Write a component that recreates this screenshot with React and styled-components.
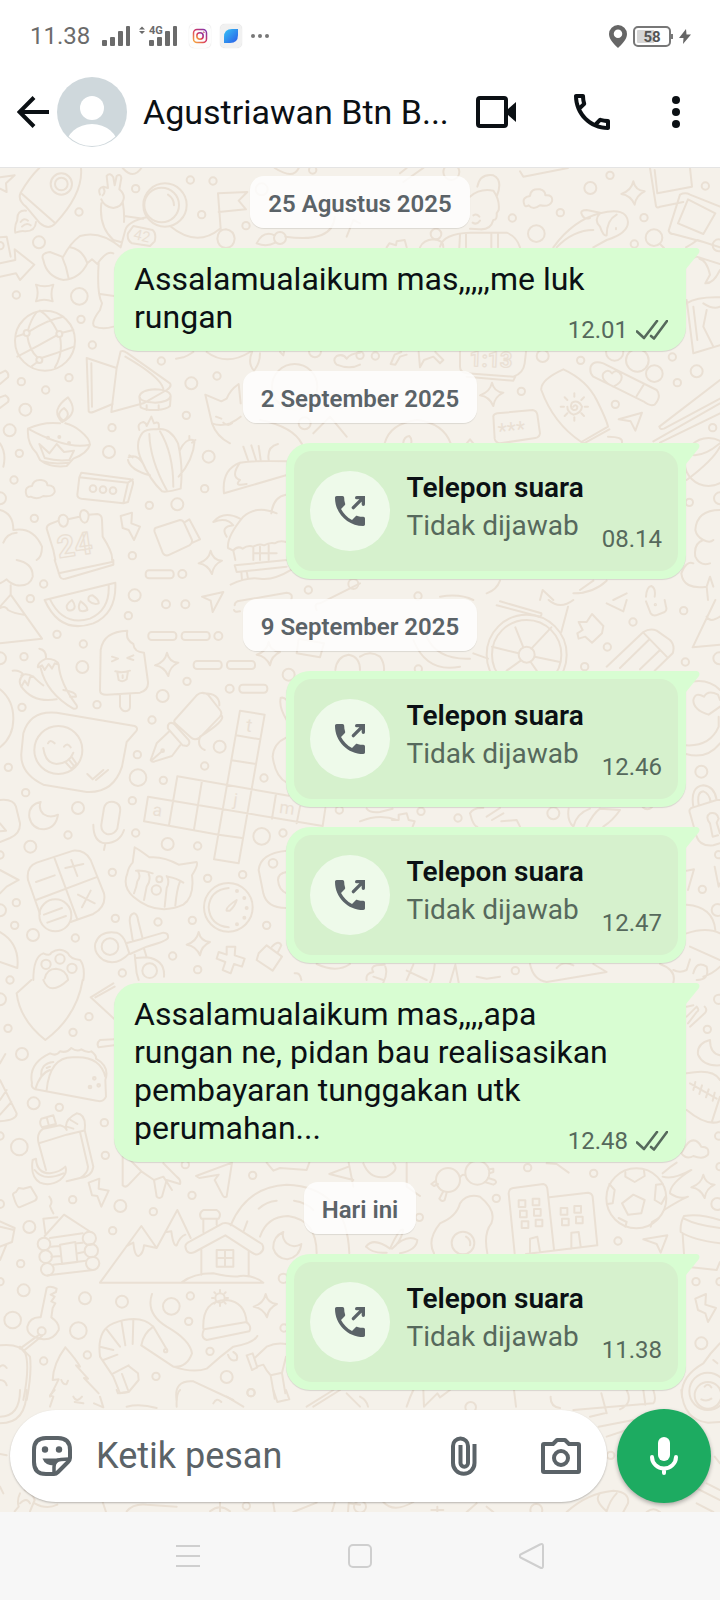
import React from 'react';
import styled, { createGlobalStyle } from 'styled-components';

const GlobalStyle = createGlobalStyle`
  * {
    box-sizing: border-box;
  }

  body {
    margin: 0;
    background: #f7f7f7;
    font-family: Roboto, 'Noto Sans', sans-serif;
    color: #0b1014;
  }

  button {
    padding: 0;
    border: 0;
    background: none;
    color: inherit;
    font: inherit;
    cursor: pointer;
  }

  svg {
    display: block;
    flex: none;
  }
`;

/* ---------- wallpaper ---------- */

// Each tile is drawn on a 3x grid and placed at x / y of the wallpaper.
// dots: [cx, cy, r], r is 11 when left out. stars: [cx, cy]. bars: [x, y, w, h].
const tiles = [
  {
    x: 0,
    y: 160,
    dots: [
      [184, 72, 32], [184, 72, 19], [237, 156], [117, 247, 18], [49, 405], [238, 409, 25], [243, 478],
      [407, 86], [571, 60], [639, 63], [605, 164], [738, 197], [277, 555], [484, 603], [207, 653],
      [64, 665], [137, 690], [76, 749, 18], [29, 811, 18], [336, 803], [574, 670, 18], [651, 648],
      [559, 766], [327, 876, 18], [58, 880], [42, 960], [626, 890, 18], [614, 986], [448, 1036],
      [532, 1033, 18], [103, 1075], [397, 1187], [938, 30], [0, 257], [0, 1015, 18], [135, 542, 90],
      [80, 519, 9], [178, 522, 9], [118, 600, 9], [495, 135, 65], [485, 135, 52], [945, 574, 18],
      [884, 680, 68], [840, 234, 18], [144, 833, 3], [178, 831, 3], [207, 849, 3], [279, 986, 10],
      [309, 989, 10], [339, 992, 10], [785, 88, 18], [914, 790, 18],
    ],
    paths: [
      'M0 52L44 46L18 70L20 96L0 86M62 98Q90 50 118 24M62 98L166 190M62 98Q52 120 78 140L120 190Q146 212 166 190Q250 100 243 24',
      'M78 152Q50 150 52 180Q42 200 46 218Q66 210 76 214Q106 214 108 186M62 186Q72 172 84 182M66 200Q80 186 92 196',
      'M0 232L20 230L32 290M0 310L46 300L44 268L103 314L60 360L48 340L0 350',
      'M108 374Q134 384 160 374Q150 400 158 424Q132 414 108 424Q118 398 108 374Z',
      'M48 530L72 522M88 514Q140 480 190 470M170 526Q110 560 52 590M186 518L220 510M82 528Q88 570 112 592M84 511Q92 480 110 456M172 514Q150 470 120 452M180 531Q190 580 165 622M124 594Q170 580 222 560M112 606L96 618',
      'M300 104Q292 84 310 80L324 84L320 48Q330 36 340 52L344 76L350 48Q362 40 364 54L358 88Q376 104 370 120Q366 140 340 144Q312 140 304 118M304 130Q296 200 340 240L362 246M368 124Q374 160 372 186M310 84Q318 96 308 106',
      'M372 168L430 176M362 262L376 210Q384 184 440 172M504 104Q522 116 522 136',
      'M400 198L458 210Q470 220 464 244L450 258L396 250Q380 240 384 220ZM510 198Q590 264 660 206',
      'M362 262Q300 210 240 228Q210 250 190 290M130 300Q140 350 190 360Q240 356 262 310Q250 270 210 262M130 300Q120 280 150 276L186 290Q200 320 206 356M262 310L276 298L292 312Q320 270 340 280M296 310Q290 400 306 430L300 450Q270 490 284 500Q310 510 340 500M300 402L342 408',
      'M654 100L742 96L716 122L738 148L656 156M654 100L662 206M652 236Q654 208 678 208Q702 212 704 236Q702 262 678 264Q654 262 652 236M368 24Q400 60 424 24',
      'M260 594L350 624M260 594L266 754Q270 760 280 756L338 732M274 610L276 740M334 756L350 624L362 574Q370 570 380 578L510 670Q516 680 500 690L430 730L334 756M376 590Q480 650 490 686',
      'M418 710Q422 690 465 688Q510 690 512 708Q508 726 465 728Q420 726 418 710L422 742Q440 752 470 750Q500 748 510 738L512 710M440 736V750M476 736V750',
      'M0 640L16 632Q28 640 24 652L0 672M0 712L16 706Q30 714 24 726L0 744M0 850Q20 880 10 920',
      'M186 786Q150 750 204 712Q240 760 186 786ZM190 782Q164 764 192 744Q216 764 190 782M84 806Q130 784 180 790M196 790Q220 796 240 812Q270 836 270 854Q200 870 84 806Q80 850 110 880L120 900Q150 924 200 918L220 896Q262 880 270 854M118 852L134 894Q170 904 208 900L222 872L192 876L170 852L148 880ZM126 904Q160 914 206 908',
      'M428 818Q402 850 424 900Q450 960 486 994Q500 998 542 986Q550 920 534 850Q510 800 470 808Q440 806 428 818ZM448 822Q450 900 500 990M480 814Q520 880 520 980M418 810Q410 790 430 786Q440 790 440 798L454 770L462 790Q480 780 476 806M384 900Q390 930 450 946M386 892Q410 880 430 912M536 950Q580 900 584 842Q560 830 540 870M568 828V840M586 840L576 848M388 886L398 892',
      'M616 704L636 790Q660 800 690 790Q710 780 722 770M616 704L664 724L680 716Q690 690 716 672L722 730M636 790Q650 830 690 850M672 1000Q664 930 720 908Q780 900 860 904M672 1000L858 946M720 908Q690 950 720 960Q700 980 740 972M780 780Q880 800 906 852M730 860L744 900M754 856L768 900M834 852Q800 860 806 900M776 858L782 900M648 770L664 776M696 790Q684 800 670 788',
      'M528 596L550 592Q562 588 580 576M620 576Q680 620 750 576M756 576Q742 610 762 632Q780 610 780 580M840 576L850 586L852 576M1080 614Q1050 630 1010 614Q996 600 1010 588Q1030 580 1040 596Q1050 580 1080 578',
      'M244 938L392 958Q402 962 398 975L384 1026L370 1030L244 1016Q232 1014 232 1004L238 952ZM238 952L384 968L370 1030M384 968L398 958',
      'M78 1000Q74 980 96 978Q100 958 124 960Q142 962 142 976Q166 976 164 996Q158 1012 130 1008Q112 1020 92 1010Q80 1014 78 1000Z',
      'M140 1106Q140 1096 150 1092L176 1082M204 1078L238 1070M266 1064L292 1062Q306 1064 306 1080L308 1130Q340 1180 336 1200M140 1106L160 1170L166 1200M176 1082Q176 1064 190 1064Q204 1068 204 1082Q202 1100 190 1100Q178 1098 176 1082M240 1068Q240 1050 252 1050Q266 1054 266 1068Q264 1088 254 1088Q242 1086 240 1068',
      'M362 1068L396 1058L394 1090L420 1100L402 1140L386 1110L368 1104Z',
      'M466 1104L540 1080Q548 1080 552 1088L576 1140Q578 1150 568 1156L504 1186Q494 1188 488 1178L464 1116Q462 1108 466 1104M552 1088L568 1078L600 1138L578 1148',
      'M684 1164Q680 1130 730 1070Q770 1034 830 1060M684 1164L700 1172Q712 1156 728 1166Q744 1154 760 1160Q776 1150 792 1156Q810 1146 824 1150Q840 1140 858 1146M640 1086Q670 1050 720 1076M640 1086Q680 1070 700 1096Q660 1100 680 1130M858 1004Q820 1010 814 1060M700 1172L706 1200M760 1162V1200M780 1160V1200M806 1156V1200M760 1180H830',
      'M0 1050Q40 1060 40 1110Q100 1100 126 1160Q126 1190 110 1200M10 1148Q20 1120 50 1118',
      'M770 250Q790 210 824 226M856 230Q1000 250 1004 170M770 250Q800 262 826 248M824 24Q880 60 896 24M1040 230L1060 180L1080 190M940 820L990 770L1040 830',
    ],
    words: [['42', 398, 236, 14, 44], ['24', 176, 1194, -8, 92, true]],
  },
  {
    x: 360,
    y: 160,
    dots: [
      [691, 84, 18], [750, 46], [601, 158], [457, 174], [529, 221, 25], [852, 173], [823, 252],
      [882, 233, 25], [1036, 78], [228, 222, 16], [46, 588], [0, 586], [548, 588, 18], [662, 601],
      [937, 591], [1010, 634, 18], [952, 668], [766, 733], [484, 694], [1058, 803], [832, 601, 34],
      [883, 641, 25], [764, 576, 26], [1046, 906, 72], [988, 1027], [1080, 1015, 18], [1076, 256, 18],
      [174, 1308], [274, 36, 24],
    ],
    stars: [[820, 98], [396, 702]],
    paths: [
      'M480 34L490 50L624 24M870 24L888 138Q892 146 900 140L970 126M884 30L892 100L996 80L990 24M960 104L926 212Q930 224 940 222L1030 246M960 104Q976 96 990 104L1080 140M984 118L954 190L1030 222L1066 160Z',
      'M352 80Q360 40 400 46Q430 60 410 110M330 110Q360 84 400 92Q420 120 416 150L410 160Q412 180 400 180Q392 210 360 208L330 206M240 260Q250 220 330 218L440 218Q470 230 480 262M300 224L298 262M318 222V262M394 220V262M414 220V262M340 166Q350 160 358 170M338 188Q350 196 360 182M180 262Q190 240 220 238Q250 240 250 262M80 262L88 250L108 256L110 244L134 240L140 262M120 40L140 24M130 66L190 24',
      'M492 130Q486 112 510 108Q512 84 540 88Q556 92 556 106Q580 104 576 124Q568 142 540 136Q520 152 506 136Q494 144 492 130Z',
      'M580 262Q640 180 720 160Q800 140 804 186Q804 220 740 240L700 262M664 160Q662 150 680 150L720 158M664 160Q670 180 690 174M720 160Q700 180 720 200Q730 230 740 226Q740 180 770 164M590 262Q640 210 700 210M900 252L912 264M978 262Q1000 250 1012 240L1080 262M768 204V208',
      'M984 300L1010 290L1080 312M1018 296Q1040 300 1050 344L1036 370Q1060 372 1080 330M980 420L1000 580L1080 556M980 430Q1010 410 1080 412M1030 430Q1060 450 1080 440M1000 440L1012 540M1040 450L1030 500L1060 560',
      'M92 612L104 584L124 576M92 612L106 614L120 590L140 584M176 576L180 622L192 600L220 590L240 610L250 600L226 576M300 576V620Q300 636 320 640L460 650Q490 640 494 610L498 576M320 650L460 662L466 650',
      'M400 768Q402 762 412 760L518 750Q530 752 532 764L540 820Q538 832 526 834L420 850Q406 848 404 836Z',
      'M544 690Q540 660 610 628Q680 660 710 720Q740 780 744 800L664 846Q580 790 544 690ZM664 846L672 850L748 808M744 830Q790 830 786 848M640 740Q646 732 652 740Q652 752 640 750Q628 742 636 728Q656 718 666 740Q664 760 640 764Q622 756 622 740M643 700v10M643 772v10M602 740h10M674 740h10M614 712l8 8M672 712l-8 8M614 768l8-8M672 768l-8-8',
      'M692 620Q700 600 730 610L890 690Q906 710 884 734Q870 740 850 724L700 650Q688 640 692 620ZM760 680Q720 660 730 640Q744 624 756 640Q772 624 784 646Q790 666 760 680ZM850 676L830 708',
      'M776 778L846 758L826 812L812 784ZM898 800L1080 660M898 800Q900 810 912 806L1080 716M880 844L1080 730M1080 760L900 848',
      'M980 960Q1060 900 1080 860M980 880Q1020 900 1080 850M1080 1050Q1010 1050 1006 1110Q1010 1130 1030 1140Q1000 1150 1006 1190Q1020 1220 1050 1210M1030 1140Q1050 1150 1060 1140M964 1240Q980 1200 1000 1210M964 1240Q970 1290 1040 1280L1050 1250L1060 1280M1040 1280L1044 1320M858 1310Q860 1280 874 1278Q888 1284 884 1310M540 1320L548 1290L580 1320M640 1300Q700 1300 740 1262M700 1262L660 1290M760 1320L800 1300M240 1310Q300 1300 340 1320M420 1262Q410 1290 380 1300',
      'M74 850Q90 790 172 780Q250 790 272 850M130 848Q132 830 148 828Q156 836 154 848M320 850L330 838L340 850',
    ],
    words: [['1:13', 328, 618, 2, 64, true], ['***', 416, 836, -6, 64]],
  },
  {
    x: 0,
    y: 560,
    dots: [
      [547, 42, 12], [655, 228, 12], [689, 386, 12], [131, 72], [91, 116], [404, 106, 18], [385, 167],
      [498, 133, 12], [556, 133, 12], [171, 223], [250, 252], [72, 290], [247, 321, 18], [66, 442],
      [291, 434], [561, 364], [488, 408, 18], [456, 480], [659, 560, 18], [614, 618], [412, 584],
      [414, 653, 25], [490, 661], [25, 622], [77, 698], [234, 744, 18], [397, 722], [204, 825],
      [407, 819], [91, 860, 18], [503, 852, 18], [593, 858], [337, 937], [49, 1028], [44, 1096],
      [99, 1125, 18], [226, 1134], [346, 1075], [474, 1086], [577, 1081], [518, 1188], [367, 1239],
      [593, 1229], [728, 944], [623, 955], [792, 654], [785, 829, 25], [849, 819], [800, 1096],
      [0, 295, 18], [0, 1051, 18], [0, 885], [866, 344, 18], [925, 90], [1060, 72, 15], [175, 570, 72],
      [488, 572, 4], [166, 1066, 48], [469, 990, 14], [478, 958, 9], [685, 1042, 73], [711, 993, 3],
      [733, 1014, 3], [740, 1044, 3], [733, 1073, 3], [711, 1093, 3], [330, 1160, 25], [449, 1232, 22],
      [138, 1213, 14], [180, 1197, 14], [216, 1225, 14], [819, 910, 13], [1018, 750],
    ],
    bars: [
      [437, 31, 84, 24], [445, 216, 84, 24], [545, 216, 84, 24], [581, 303, 84, 24],
      [681, 303, 84, 24], [718, 374, 84, 24],
    ],
    stars: [[501, 312], [596, 1150], [632, 6], [806, 280]],
    paths: [
      'M164 0L180 50Q186 60 196 56L340 14V0M176 40L336 6M50 0Q100 10 98 50Q90 80 50 76Q30 70 20 58Q10 66 0 70M32 76V104M32 104L126 236L0 250M0 144Q18 136 24 150Q40 160 72 164M32 104L0 140',
      'M134 120L346 68Q350 160 280 190Q180 224 134 120ZM150 118Q190 200 270 176Q330 150 326 76M204 150Q192 136 216 120Q230 140 220 148Q212 154 204 150ZM240 152Q232 140 242 124Q264 140 262 150Q250 156 240 152ZM266 122Q262 106 278 106Q298 120 296 130Q280 136 266 122Z',
      'M606 110L670 96L638 156L632 122Z',
      'M300 392L302 270Q310 214 382 212Q376 240 400 252Q402 276 432 278L444 366Q446 390 420 398L320 404Q300 404 300 392ZM360 404V440Q366 454 376 454Q390 452 390 440V402M336 290L354 296L336 304M400 286L382 294L400 300M346 334Q368 340 390 332M352 338L356 360Q368 368 380 358L384 334M368 346V354',
      'M118 266Q140 270 138 296Q110 310 114 322L126 316L134 330L146 312L156 326L164 310L176 314Q170 296 138 296M176 314Q180 370 230 436Q234 448 220 446Q140 400 122 324M38 332Q60 330 70 344Q52 360 64 380L74 362L84 376L90 352L100 350Q80 338 64 346M64 380Q100 430 170 418M100 350Q120 370 130 376M190 390Q230 396 228 410L210 410',
      'M70 520Q90 450 170 458L404 498Q416 504 408 514L380 546L366 620Q340 700 260 696L130 674Q60 640 64 580ZM144 550Q150 536 164 550M192 560Q202 546 212 562M130 564Q136 610 170 612Q208 610 220 578M196 606L214 626L230 612L216 592M206 598L222 618M262 642L278 658L310 630M288 660L324 630',
      'M524 480L590 406Q606 392 624 404L660 450Q668 460 660 470L600 532Q584 544 572 532L528 492Q520 486 524 480ZM508 490Q516 486 524 494L566 540Q572 552 560 558L548 556L504 506Q502 496 508 490ZM508 514L470 550L452 600Q456 608 464 604L516 588L540 556M456 600L486 574M610 400Q660 400 658 436M664 466Q680 480 600 530Q590 560 614 570',
      'M720 452L794 464L716 910L642 898ZM708 526L780 538M695 601L768 612M656 824L726 834M532 649L866 707M532 649L507 795M444 710L968 798L976 745M444 710L432 784L656 824M606 662L582 808M828 702L816 776M900 740L890 790',
      'M0 388Q40 420 40 476Q40 530 0 562M122 726Q84 734 88 772Q96 808 132 808Q168 804 174 764Q150 776 130 762Q114 746 122 726Z',
      'M312 744Q318 722 342 726Q364 732 360 756L352 806Q342 826 320 822Q302 814 304 794ZM280 794Q280 846 316 850Q360 848 372 810M316 850L312 870M0 720Q40 716 48 740L60 790Q62 820 30 834L0 846M0 790L18 812L0 814',
      'M84 960Q78 920 110 908L220 872Q256 870 272 900L312 1000Q320 1040 280 1062L212 1086M84 960L120 1062M164 896L232 1078M108 1020L288 952M108 966L164 946M196 924L250 912M214 900L232 948M234 1004L284 1030M272 992L246 1042M132 1064L186 1044M142 1088L198 1068',
      'M404 862Q420 870 448 892Q490 888 536 914L590 906Q596 914 576 946Q584 1010 550 1034Q470 1070 400 1010Q366 980 382 940Q386 920 398 908ZM408 932Q430 930 458 940M414 934Q424 950 412 964Q410 980 402 1000M446 942Q454 960 440 980L432 1020M500 948Q510 964 500 984L494 1040M504 950Q530 954 550 968M540 964Q530 990 526 1036',
      'M686 984Q630 990 626 1042Q630 1096 686 1102M680 1052Q676 1042 710 1020Q706 1036 690 1052Z',
      'M390 1090Q386 1064 402 1060Q412 1062 414 1080L428 1136L490 1118Q506 1118 504 1134Q500 1144 440 1160L390 1182M398 1140L390 1090M378 1150L428 1136M388 1180Q350 1220 310 1200Q280 1180 286 1150Q300 1110 350 1118Q370 1126 378 1150L388 1180M404 1184L410 1240L416 1260M432 1166L440 1192Q496 1200 492 1250M408 1194L440 1192',
      'M680 1160L706 1160L704 1186L734 1196L726 1220L702 1212L692 1240L668 1230L676 1206L650 1196L656 1176L680 1184ZM776 1180L800 1156L846 1190L818 1232L770 1200ZM816 1160Q836 1138 844 1156L832 1180',
      'M100 1260Q100 1190 130 1180Q150 1190 154 1178Q180 1160 204 1180Q210 1196 240 1200Q256 1220 250 1260M134 1256Q140 1226 168 1226Q200 1230 204 1258M0 930L56 960L20 980L0 1000M0 1116Q60 1150 52 1224L0 1206',
      'M704 16L860 0M704 16L710 36L860 20M724 36L726 60M740 34L744 56M692 74Q740 50 780 56Q820 62 876 28M704 136Q704 128 712 124L860 98Q880 100 874 118M702 150Q704 158 720 154M950 150Q940 130 960 130L1080 70',
      'M860 872Q780 880 776 930L790 1000Q800 1044 858 1044M860 936Q834 940 834 960Q836 990 860 1000M842 414Q836 440 860 480M842 414Q850 410 860 420M860 532Q820 550 818 590Q826 650 860 668M1006 330Q1010 290 1046 284Q1080 290 1080 330M950 1212Q1010 1240 1050 1212M884 1240Q900 1236 904 1260M896 236L972 250L960 292L890 280Z',
    ],
    words: [['t', 736, 514, 8, 56], ['a', 456, 766, 8, 52], ['j', 698, 736, 8, 52], ['m', 836, 758, 8, 52]],
  },
  {
    x: 360,
    y: 600,
    dots: [
      [500, 164, 120], [500, 164, 104], [500, 164, 24], [971, 32], [819, 66], [742, 141], [674, 200],
      [976, 186], [1078, 175, 18], [175, 207], [183, 634], [294, 654], [580, 640, 18], [1024, 515, 18],
      [1027, 868], [466, 1112], [1076, 764], [1073, 930, 18], [862, 610, 18], [886, 14, 2],
    ],
    paths: [
      'M466 82L490 142M574 82L514 146M524 170L600 186M476 160L396 140M482 182L440 212M512 186L530 212M410 16L540 50Q546 46 544 40L420 4M624 20L604 96M566 0Q600 30 640 0M340 160L384 176M160 120Q200 220 300 200M200 110Q230 180 330 176',
      'M656 66L680 66L696 42L730 78L726 100L696 128L676 110L656 116L652 100L668 90ZM858 4L872 40Q878 48 888 46L914 36Q922 30 918 20L914 0M0 170Q30 150 60 170Q74 190 72 212',
      'M740 200L850 96Q870 84 890 92L930 120Q946 136 938 160L884 212M850 98L920 170M866 120L780 204M900 150L840 208M1066 0L998 142L1080 134M1040 50Q1050 70 1080 50M740 10L790 34L800 0',
      'M978 250Q1040 230 1080 270M978 462Q1040 480 1080 430M978 436Q1050 440 1076 380V350M1046 344Q1000 330 1000 300Q1006 274 1032 290Q1044 268 1074 284L1080 300M1046 344L1080 320',
      'M1000 620Q990 560 1030 556Q1064 560 1070 600M1016 614Q1010 576 1030 574Q1048 580 1052 606M990 640Q984 626 1000 622L1070 600L1080 600M990 640L1010 710Q1020 740 1060 736L1080 730M1050 670Q1034 650 1050 640Q1070 634 1076 656L1070 668L1080 700M1050 670L1058 710L1074 706',
      'M980 812L1002 808L984 870M1064 800L1076 860L1080 850M980 914Q1060 920 1066 990M980 1000Q1040 980 1080 1000M990 1040L1080 1080M940 1110Q960 1120 980 1110L990 1078M1000 1120Q1010 1080 1040 1100Q1050 1140 1010 1140M1080 1100Q1060 1120 1030 1130M900 1092Q950 1110 940 1148',
      'M330 640Q340 680 352 680M330 640Q340 622 370 624M380 650L420 624M396 660L430 640M424 664L470 660L480 680M626 626Q620 660 640 680M640 680Q650 640 690 626M680 680Q700 640 720 626M780 630Q760 660 730 680M720 626L780 630M0 664Q60 640 110 660M96 660L116 660V644L140 640L146 660L164 664L158 680M20 626Q30 640 60 636L98 626',
      'M20 1140Q16 1120 40 1116Q30 1100 50 1096L74 1094M40 1130L70 1140M76 1100Q84 1120 70 1148M140 1140L160 1094M224 1094Q220 1130 210 1148M140 1112L200 1140M270 1148L286 1094L296 1148M350 1130L380 1136L420 1130M510 1092Q520 1140 560 1146L740 1116L700 1092M590 1104Q610 1080 640 1096',
    ],
  },
  {
    x: 0,
    y: 980,
    dots: [
      [30, 0], [0, 58, 18], [267, 110], [24, 145], [219, 157], [66, 222, 18], [101, 370, 18], [178, 382],
      [313, 428], [58, 501, 25], [316, 526], [0, 468], [218, 659], [361, 678, 18], [460, 695], [576, 646],
      [88, 741, 18], [338, 752], [62, 851], [0, 905], [71, 931, 18], [255, 955, 18], [366, 965, 18],
      [571, 948], [514, 979, 25], [38, 1020, 25], [235, 1052, 25], [566, 1024], [262, 1125], [630, 1114],
      [131, 1143], [468, 1189], [680, 1191, 18], [753, 1238], [556, 554], [758, 586], [0, 672, 12],
      [850, 895, 14], [852, 1044], [283, 295, 4], [270, 321, 4], [296, 316, 4], [132, 792, 19],
      [137, 830, 19], [142, 868, 19], [268, 775, 20], [274, 812, 20], [278, 850, 20], [125, 1054, 12],
      [497, 1112, 5], [660, 954, 14],
    ],
    stars: [[797, 976]],
    paths: [
      'M50 40L94 0M50 40Q60 120 136 180Q230 110 248 0M130 0Q150 50 204 0M272 52L340 10M272 52L342 116M286 52L344 20',
      'M96 310Q84 250 150 220Q170 230 180 214Q200 220 214 204Q230 216 244 208Q262 220 274 214Q290 226 288 236Q330 260 316 300L318 350Q310 368 290 362L106 328Q92 322 96 310ZM140 330Q150 230 220 232Q300 226 316 290M106 328Q120 280 150 270M124 290Q120 250 160 246M140 264L150 260',
      'M342 178L300 180Q288 190 296 202L342 196M124 416L160 406L168 432L126 442Q116 430 124 416ZM140 412L146 434M116 490Q108 460 130 446L180 436Q196 440 200 450Q190 420 230 400Q260 404 254 450L280 560Q276 590 240 594L200 604M116 490Q150 480 200 464L250 452M116 490L138 570M240 456L264 560Q264 580 240 594M200 440L220 446M212 420L232 432',
      'M98 540L108 536Q110 580 150 580Q180 576 196 560Q204 580 180 600Q150 620 120 608Q90 590 98 540ZM104 570Q130 606 190 580',
      'M40 648Q36 640 48 636L56 624L70 626L92 620L110 650Q112 660 100 664L58 682Q50 682 40 648ZM266 608L298 596L296 626L326 632L304 680L292 648L276 646ZM148 650Q160 664 150 678Q154 690 160 700',
      'M130 716L172 712M130 716L136 760M134 768L192 704L272 756M150 774L248 760M180 794L226 786L232 846L186 852ZM152 800L178 798M154 830L182 828M160 854L258 842M144 886L280 870M232 790L248 788M234 820L252 816',
      'M300 908L424 738L470 804L532 690L572 774M300 908H790M380 798L400 788Q404 830 416 828Q430 820 432 796L470 804M500 756L514 754Q520 800 530 796Q540 770 556 764',
      'M556 800Q556 790 570 784L668 730Q680 726 694 734L786 792Q796 808 780 820Q770 828 756 818L676 766L584 816Q560 826 556 800ZM604 808V884M746 814V884M650 810H700V860H650ZM650 834H700M675 810V860M544 908Q580 880 640 880Q700 894 720 888Q760 884 790 908M610 756V716M650 734V716M604 716Q594 700 610 690H650Q666 700 656 716Z',
      'M692 736Q740 620 860 614Q1040 620 1048 820M776 686Q800 664 830 662M882 662Q920 668 940 690M780 770Q800 710 864 708Q950 720 950 820M742 724L730 756M850 756Q818 770 820 806Q830 836 862 838Q900 830 904 792Q880 806 860 790Q844 772 850 756Z',
      'M368 530V616Q376 624 384 616L424 574L380 530M424 574L462 600L470 650Q478 658 486 650L500 600L540 612Q544 600 530 590L490 550M462 600L490 590L516 630M588 588L696 548L680 650Q672 654 668 646L644 600L656 584L598 594ZM800 548L820 572L840 564L920 570L928 548M988 582L1046 560M988 582L1060 600M1046 548L1060 620',
      'M140 924Q150 916 170 926L168 936L152 944L164 950L154 964L166 970L158 984L154 1012Q180 1030 176 1050Q160 1080 130 1078Q80 1070 82 1040Q90 1010 122 1012ZM118 1064L60 1106M126 1068L74 1110',
      'M340 1190L300 1130Q290 1050 340 1030Q420 1000 460 1040L500 1108M424 1096Q430 1060 460 1040M424 1096L520 1160Q560 1164 576 1120Q570 1080 500 1040Q436 1000 456 942M300 1100L340 1110M320 1048L360 1100M364 1022L376 1096M400 1018L398 1092M340 1180L386 1156M310 1140L352 1124M340 1190L360 1240L386 1236L416 1200L414 1180L386 1158M366 1182L384 1230M520 1160Q580 1180 620 1166Q660 1130 700 1100Q760 1090 772 1068M684 1124Q690 1146 710 1140Q716 1124 700 1116',
      'M610 1046Q606 960 680 960Q736 966 740 1028M612 1048L740 1026Q756 1040 748 1054L620 1080Q600 1074 612 1048ZM660 930v6M660 972v6M636 954h6M678 954h6M643 937l4 4M677 937l-4 4M643 971l4-4M677 971l-4-4',
      'M740 1126L758 1120L772 1162L756 1170ZM764 1134L800 1100Q830 1086 858 1092M770 1160L790 1154Q800 1174 812 1186L846 1178L858 1130M812 1186L824 1256M846 1180L856 1240',
      'M196 1102Q230 1140 240 1160L228 1156L264 1196L252 1194L296 1240M196 1102Q160 1150 158 1200L176 1198L150 1250M184 1200Q190 1216 200 1212L204 1202M0 1096Q60 1090 76 1120Q90 1160 70 1260M60 1100L90 1130Q96 1180 80 1260M0 1160Q10 1150 20 1164M0 1200Q16 1200 20 1216M530 1260Q520 1200 580 1204L700 1260',
      'M0 300L50 400Q52 420 0 424M0 250L16 222M0 360L20 330M0 404L34 366M0 724L44 744L36 786L0 800M0 740L42 750M20 792L0 840',
    ],
  },
  {
    x: 360,
    y: 980,
    dots: [
      [1042, 148], [1076, 58, 14], [1076, 468], [503, 563], [701, 580], [409, 655], [178, 712],
      [774, 783], [1008, 905], [1080, 560], [1080, 905], [1072, 672, 18], [1024, 1090, 18],
      [829, 655, 90], [264, 600, 36], [352, 578, 36], [309, 789, 34], [1044, 1234, 56],
    ],
    bars: [
      [476, 661, 20, 20], [518, 656, 20, 20], [480, 692, 20, 20], [522, 687, 20, 20],
      [485, 724, 20, 20], [527, 719, 20, 20], [602, 684, 20, 20], [643, 678, 20, 20],
      [606, 716, 20, 20], [648, 710, 20, 20],
    ],
    stars: [[1030, 618]],
    paths: [
      'M980 80L1000 76M980 110L1010 80Q1020 90 1010 96L984 130M1034 80Q1044 90 1034 100L990 140M1050 180Q1010 190 1014 224Q1030 260 1080 256M1050 180Q1050 220 1080 226',
      'M980 280Q1060 264 1080 300M980 390Q1040 440 1080 424M1080 350L1056 424M990 310L1070 356M1006 306L1000 330M1026 316L1018 342M1046 328L1038 352M1064 338L1058 362',
      'M964 520Q980 490 990 484Q1010 474 1024 500Q1050 500 1044 524Q1030 540 1000 528Q980 540 964 520',
      'M820 644L854 660L844 700L804 704L786 670ZM796 576L796 590L824 606L854 588L852 572M888 614L908 612M888 614L884 660L904 672L916 650M748 612L764 630L758 670L742 672M776 714L800 726L796 740M872 740L876 726L896 714',
      'M908 580Q930 560 950 548M908 590Q940 600 994 570Q930 610 930 640Q960 660 984 650Q960 660 912 690M300 592Q308 580 316 586M228 602L214 612L222 618L234 612M386 568L400 566V576L388 580M250 634L238 656Q246 668 254 660L260 638M374 606L400 614Q414 608 404 600L384 594',
      'M222 820Q200 780 240 730Q290 710 300 670Q320 640 360 650Q410 690 394 730Q370 760 382 820M318 770Q334 780 330 796',
      'M464 820L446 640Q446 626 460 624L550 612Q560 614 562 626L582 808M568 652L684 638Q696 640 698 650L712 796L498 822M510 822V776L532 770L540 816M634 806V758L656 756L662 800M850 778L922 766L902 818L890 792Z',
      'M972 708Q960 730 962 756Q1000 780 1080 790M972 708Q1020 700 1080 720M972 716Q1010 736 1080 744M968 764L974 850M980 860L1070 870L1080 846M1006 956L1038 942L1036 974L1068 984L1044 1026L1036 1000L1014 990Z',
      'M1080 1090Q1050 1120 1030 1150Q960 1190 966 1250M1034 1220Q1044 1208 1054 1222M1060 1140L1072 1150M18 800Q40 770 90 806Q120 740 130 750Q120 790 96 806Q140 760 172 780Q170 810 120 820M18 800Q40 822 80 818M10 550Q30 600 80 590Q120 570 100 550M140 550V620L180 648M560 550L590 552L626 578',
    ],
  },
  {
    x: 0,
    y: 1390,
    dots: [[753, 8], [739, 348]],
    paths: [
      'M80 0Q80 100 0 100M60 0Q60 80 0 80M150 50L160 20L150 16L164 0M220 20Q230 40 246 20M224 36L250 40M282 40L310 52L300 20M350 0L354 10L384 6M530 50Q528 10 540 0M640 40Q650 20 664 36M680 20L730 50M820 0L832 36L868 28L858 0M920 50L1000 0M940 50L1020 0M1040 10L1080 50M380 50Q420 40 470 54M0 192L20 196M0 290L10 310',
      'M60 310Q50 330 56 350L44 364M74 300Q100 310 104 330L90 364M60 340Q80 320 90 340M104 340Q140 360 172 344M308 336L318 366M380 364Q400 340 440 344L530 350M660 336V366M630 364Q660 340 690 364M820 340L824 366M880 366L950 338M1004 338L996 366M1044 366L1046 340L1080 344',
    ],
  },
  {
    x: 360,
    y: 1390,
    dots: [[332, 52, 16], [1044, 16, 40], [752, 196], [529, 360, 18], [0, 350, 18]],
    paths: [
      'M140 50Q150 20 160 0M0 20Q20 30 24 50M192 50L190 0M192 50L232 10L240 22L270 0M462 0L468 50M572 20Q570 50 600 54M640 60L880 40Q890 30 880 0M724 10L740 70M800 0Q820 40 780 58M850 0L856 44M690 80L740 68M964 0Q970 90 1044 98L1080 96M1024 28Q1040 36 1054 26M716 110L820 90M740 140L800 120',
      'M1040 280L1080 300M1000 290L1080 330M1010 340L1060 366M620 366Q680 310 760 302Q810 306 804 340L790 366M720 310Q700 330 740 364M770 310Q750 330 740 364M860 366Q880 350 900 366M214 360L250 360M232 350V366M320 366L350 340M380 350L400 366M70 336Q100 370 160 336M1064 200L1080 220',
    ],
  },
];

const starPath = ([x, y]) =>
  `M${x} ${y - 34}Q${x + 6} ${y - 6} ${x + 34} ${y - 4}Q${x + 8} ${y + 8} ${x + 4} ${y + 36}Q${x - 8} ${y + 8} ${x - 36} ${y + 4}Q${x - 6} ${y - 6} ${x} ${y - 34}Z`;

const Wallpaper = () => (
  <WallpaperSvg viewBox="0 168 720 1344" preserveAspectRatio="xMidYMin slice" aria-hidden="true">
    {tiles.map(({ x, y, dots = [], bars = [], stars = [], paths = [], words = [] }) => (
      <g key={`${x}-${y}`} transform={`translate(${x} ${y}) scale(0.33333)`}>
        <path d={[...paths, ...stars.map(starPath)].join('')} />
        {dots.map(([cx, cy, r = 11]) => (
          <circle key={`${cx}-${cy}-${r}`} cx={cx} cy={cy} r={r} />
        ))}
        {bars.map(([bx, by, w, h]) => (
          <rect key={`${bx}-${by}`} x={bx} y={by} width={w} height={h} rx={w > 30 ? 10 : 0} />
        ))}
        {words.map(([word, wx, wy, angle, size, outlined]) => (
          <text
            key={word}
            transform={`translate(${wx} ${wy}) rotate(${angle})`}
            fontSize={size}
            fontWeight={outlined ? 700 : 400}
            fill={outlined ? 'none' : '#eae0d4'}
            stroke={outlined ? '#eae0d4' : 'none'}
            strokeWidth="4"
          >
            {word}
          </text>
        ))}
      </g>
    ))}
  </WallpaperSvg>
);

/* ---------- icons ---------- */

const StrokeIcon = ({ w, h, sw = 4, children }) => (
  <svg
    width={w}
    height={h}
    viewBox={`0 0 ${w} ${h}`}
    fill="none"
    stroke="currentColor"
    strokeWidth={sw}
    strokeLinejoin="round"
    aria-hidden="true"
  >
    {children}
  </svg>
);

const SignalIcon = () => (
  <svg width="28" height="20" viewBox="0 0 28 20" fill="#6b6b6b" aria-hidden="true">
    <rect x="0" y="14" width="5" height="6" rx="1" />
    <rect x="8" y="11" width="5" height="9" rx="1" />
    <rect x="16" y="5" width="5" height="15" rx="1" />
    <rect x="24" y="0" width="4" height="20" rx="1" />
  </svg>
);

const DataSignalIcon = () => (
  <svg width="41" height="28" viewBox="0 -4 41 28" fill="#6b6b6b" aria-hidden="true">
    <path d="M0 3.500L3 .5L6 3.500ZM0 5L3 8L6 5Z" />
    <text x="10" y="8" fontSize="11" fontWeight="700">
      4G
    </text>
    <rect x="10" y="14" width="5" height="6" rx="1" />
    <rect x="18" y="11" width="5" height="9" rx="1" />
    <rect x="26" y="5" width="5" height="15" rx="1" />
    <rect x="34" y="0" width="4" height="20" rx="1" />
  </svg>
);

const InstagramIcon = () => (
  <svg width="16" height="16" viewBox="0 0 16 16" fill="none" stroke="url(#ig)" aria-hidden="true">
    <defs>
      <linearGradient id="ig" x1="0" y1="1" x2="1" y2="0">
        <stop offset="0" stopColor="#f9b13c" />
        <stop offset="0.5" stopColor="#d8365f" />
        <stop offset="1" stopColor="#7a35b5" />
      </linearGradient>
    </defs>
    <rect x="1.500" y="1.500" width="13" height="13" rx="3.500" strokeWidth="1.500" />
    <circle cx="8" cy="8" r="3.200" strokeWidth="1.600" />
    <circle cx="11.800" cy="4.300" r=".5" />
  </svg>
);

const LeafIcon = () => (
  <svg width="16" height="16" viewBox="0 0 16 16" aria-hidden="true">
    <defs>
      <linearGradient id="leaf" x1="0" y1="0" x2="1" y2="1">
        <stop offset="0" stopColor="#35c3f5" />
        <stop offset="1" stopColor="#2b5be8" />
      </linearGradient>
    </defs>
    <path d="M3 3Q5 1 9 1H15V7Q15 11 13 13Q11 15 7 15H1V9Q1 5 3 3Z" fill="url(#leaf)" />
  </svg>
);

const PinIcon = () => (
  <svg width="18" height="23" viewBox="0 0 18 23" fill="#666" aria-hidden="true">
    <path
      fillRule="evenodd"
      d="M9 0A9 9 0 0 0 0 9C0 14.500 5 19 9 23C13 19 18 14.500 18 9A9 9 0 0 0 9 0ZM9 4.500A4.200 4.200 0 1 1 9 13A4.200 4.200 0 0 1 9 4.500Z"
    />
  </svg>
);

const BoltIcon = () => (
  <svg width="12" height="15" viewBox="0 0 12 15" fill="#666" aria-hidden="true">
    <path d="M7 0L0 9H4.500L4 15L12 5.500H7.500Z" />
  </svg>
);

const BackIcon = () => (
  <StrokeIcon w={32} h={32}>
    <path d="M32 16H3M17 1.500L2.500 16L17 30.500" strokeLinejoin="miter" />
  </StrokeIcon>
);

const AvatarIcon = () => (
  <svg width="70" height="70" viewBox="0 0 70 70" aria-hidden="true">
    <defs>
      <clipPath id="avatar">
        <circle cx="35" cy="35" r="34" />
      </clipPath>
    </defs>
    <circle cx="35" cy="35" r="35" fill="#cfd8dc" />
    <circle cx="35" cy="31" r="12" fill="#fff" />
    <ellipse cx="35" cy="69" rx="26" ry="22" fill="#fff" clipPath="url(#avatar)" />
  </svg>
);

const VideoIcon = () => (
  <StrokeIcon w={40} h={32}>
    <rect x="2" y="2" width="28" height="28" rx="2" />
    <path d="M31 14L40 6V26L31 18Z" fill="currentColor" stroke="none" />
  </StrokeIcon>
);

const PhoneIcon = () => (
  <svg width="48" height="48" viewBox="0 0 24 24" fill="currentColor" aria-hidden="true">
    <path d="M6.540 5c.06.89.21 1.760.45 2.590l-1.200 1.200c-.41-1.200-.67-2.470-.76-3.790h1.510m9.860 12.020c.85.24 1.720.39 2.600.45v1.490c-1.320-.09-2.590-.35-3.800-.75l1.200-1.190M7.500 3H4c-.55 0-1 .45-1 1 0 9.390 7.610 17 17 17 .55 0 1-.45 1-1v-3.490c0-.55-.45-1-1-1-1.240 0-2.450-.2-3.570-.57-.1-.04-.21-.05-.31-.05-.26 0-.51.1-.71.29l-2.200 2.200c-2.830-1.450-5.150-3.760-6.590-6.590l2.200-2.200c.28-.28.36-.67.25-1.020C8.700 6.450 8.500 5.250 8.500 4c0-.55-.45-1-1-1z" />
  </svg>
);

const MoreIcon = () => (
  <svg width="8" height="32" viewBox="0 0 8 32" fill="currentColor" aria-hidden="true">
    <circle cx="4" cy="4" r="4" />
    <circle cx="4" cy="16" r="4" />
    <circle cx="4" cy="28" r="4" />
  </svg>
);

const OutgoingCallIcon = () => (
  <svg width="40" height="40" viewBox="0 0 24 24" fill="#5b6368" aria-hidden="true">
    <path d="M20 15.500c-1.250 0-2.450-.2-3.570-.57-.35-.11-.74-.03-1.020.24l-2.200 2.200c-2.830-1.440-5.150-3.750-6.590-6.580l2.200-2.210c.28-.27.36-.66.25-1.010C8.700 6.450 8.500 5.250 8.500 4c0-.55-.45-1-1-1H4c-.55 0-1 .45-1 1 0 9.390 7.610 17 17 17 .55 0 1-.45 1-1v-3.500c0-.55-.45-1-1-1z" />
    <path
      d="M14 10L20 4M16 4H20V8"
      fill="none"
      stroke="#5b6368"
      strokeWidth="2"
      strokeLinecap="round"
    />
  </svg>
);

const TicksIcon = () => (
  <StrokeIcon w={32} h={20} sw={2.6}>
    <path d="M1 11.500L8 18L21 1M15 16L18 18.500L31 1" strokeLinecap="round" />
  </StrokeIcon>
);

const TailIcon = () => (
  <svg width="16" height="24" viewBox="0 0 16 24" fill="#d8fdd2" aria-hidden="true">
    <path d="M0 0H13Q16.500 1 15 5L2 21H0Z" />
  </svg>
);

const StickerIcon = () => (
  <StrokeIcon w={40} h={40}>
    <path d="M14 2H26Q38 2 38 14V22Q38 24 36 26L26 36Q24 38 22 38H14Q2 38 2 26V14Q2 2 14 2Z" />
    <path d="M22 37V31Q22 24 29 23.500L37 23" strokeWidth="3.500" />
    <circle cx="13" cy="13.500" r="3.200" fill="currentColor" stroke="none" />
    <circle cx="27" cy="13.500" r="3.200" fill="currentColor" stroke="none" />
    <path d="M10.500 22.500H29L22 29.500Q13 29.500 10.500 22.500Z" fill="currentColor" stroke="none" />
  </StrokeIcon>
);

const ClipIcon = () => (
  <StrokeIcon w={26} h={40}>
    <path d="M23.500 8V27A10.700 10.700 0 0 1 2 27V10A7.500 7.500 0 0 1 17 10V27A3.500 3.500 0 0 1 9.500 27V9" />
  </StrokeIcon>
);

const CameraIcon = () => (
  <StrokeIcon w={40} h={36}>
    <path d="M3 6H12L16 2H24L28 6H37Q38 6 38 7V33Q38 34 37 34H3Q2 34 2 33V7Q2 6 3 6Z" />
    <circle cx="20" cy="20" r="7" />
  </StrokeIcon>
);

const MicIcon = () => (
  <StrokeIcon w={28} h={38}>
    <rect x="8" y="0" width="12" height="24" rx="6" fill="currentColor" stroke="none" />
    <path d="M2 20A12 11.500 0 0 0 26 20M14 32V36" strokeLinecap="round" />
  </StrokeIcon>
);

/* ---------- parts ---------- */

const TextBubble = ({ children, time }) => (
  <Message>
    {children}
    <Meta>
      <Time>{time}</Time>
      <TicksIcon />
    </Meta>
    <Tail>
      <TailIcon />
    </Tail>
  </Message>
);

const CallBubble = ({ time }) => (
  <Call>
    <CallCard>
      <CallBadge>
        <OutgoingCallIcon />
      </CallBadge>
      <CallLines>
        <CallTitle>Telepon suara</CallTitle>
        <CallStatus>Tidak dijawab</CallStatus>
      </CallLines>
      <CallTime>{time}</CallTime>
    </CallCard>
    <Tail>
      <TailIcon />
    </Tail>
  </Call>
);

const App = () => {
  return (
    <Screen>
      <GlobalStyle />
      <StatusBar>
        <StatusGroup>
          <Clock>11.38</Clock>
          <SignalIcon />
          <DataSignalIcon />
          <AppTile>
            <InstagramIcon />
          </AppTile>
          <AppTile $shaded>
            <LeafIcon />
          </AppTile>
          <svg width="18" height="4" viewBox="0 0 18 4" fill="#777" aria-hidden="true">
            <circle cx="2" cy="2" r="2" />
            <circle cx="9" cy="2" r="2" />
            <circle cx="16" cy="2" r="2" />
          </svg>
        </StatusGroup>
        <StatusGroup $tight>
          <PinIcon />
          <Battery>58</Battery>
          <BoltIcon />
        </StatusGroup>
      </StatusBar>

      <Header>
        <BackButton type="button" aria-label="Kembali">
          <BackIcon />
        </BackButton>
        <AvatarIcon />
        <ContactName>Agustriawan Btn B...</ContactName>
        <HeaderButton type="button" aria-label="Panggilan video">
          <VideoIcon />
        </HeaderButton>
        <HeaderButton type="button" aria-label="Panggilan suara">
          <PhoneIcon />
        </HeaderButton>
        <HeaderButton type="button" aria-label="Opsi lainnya" $narrow>
          <MoreIcon />
        </HeaderButton>
      </Header>

      <Chat>
        <Wallpaper />
        <Thread>
          <DatePill>25 Agustus 2025</DatePill>
          <TextBubble time="12.01">Assalamualaikum mas,,,,,me luk rungan</TextBubble>
          <DatePill>2 September 2025</DatePill>
          <CallBubble time="08.14" />
          <DatePill>9 September 2025</DatePill>
          <CallBubble time="12.46" />
          <CallBubble time="12.47" />
          <TextBubble time="12.48">
            Assalamualaikum mas,,,,apa rungan ne, pidan bau realisasikan pembayaran tunggakan utk
            perumahan...
          </TextBubble>
          <DatePill>Hari ini</DatePill>
          <CallBubble time="11.38" />
        </Thread>
        <Composer>
          <InputBar>
            <button type="button" aria-label="Stiker">
              <StickerIcon />
            </button>
            <MessageInput type="text" aria-label="Ketik pesan" placeholder="Ketik pesan" />
            <button type="button" aria-label="Lampirkan">
              <ClipIcon />
            </button>
            <CameraButton type="button" aria-label="Kamera">
              <CameraIcon />
            </CameraButton>
          </InputBar>
          <MicButton type="button" aria-label="Rekam pesan suara">
            <MicIcon />
          </MicButton>
        </Composer>
      </Chat>

      <NavBar>
        <NavButton type="button" aria-label="Menu">
          <StrokeIcon w={24} h={24} sw={2}>
            <path d="M0 2H24M0 12H24M0 22H24" />
          </StrokeIcon>
        </NavButton>
        <NavButton type="button" aria-label="Beranda">
          <StrokeIcon w={24} h={24} sw={2}>
            <rect x="1" y="1" width="22" height="22" rx="4" />
          </StrokeIcon>
        </NavButton>
        <NavButton type="button" aria-label="Kembali">
          <StrokeIcon w={26} h={26} sw={2}>
            <path d="M21 1.500Q24 0 24 3V23Q24 26 21 24.500L1.500 14.500Q0 13 1.500 11.500Z" />
          </StrokeIcon>
        </NavButton>
      </NavBar>
    </Screen>
  );
};

/* ---------- styles ---------- */

const Screen = styled.div`
  min-height: 100vh;
  display: flex;
  flex-direction: column;
`;

const StatusBar = styled.div`
  display: flex;
  align-items: center;
  justify-content: space-between;
  height: 72px;
  padding: 0 29px 0 30px;
  background: #fff;
`;

const StatusGroup = styled.div`
  display: flex;
  align-items: center;
  gap: ${({ $tight }) => ($tight ? '6px' : '9px')};
`;

const Clock = styled.span`
  margin-right: 3px;
  font-size: 24px;
  line-height: 28px;
  color: #6b6b6b;
`;

const AppTile = styled.span`
  display: grid;
  place-items: center;
  width: 22px;
  height: 24px;
  border-radius: 5px;
  background: ${({ $shaded }) => ($shaded ? '#f1f1f1' : '#fdfdfd')};
  box-shadow: 0 0 1px rgba(0, 0, 0, 0.2);
`;

const Battery = styled.span`
  position: relative;
  display: grid;
  place-items: center;
  width: 38px;
  height: 21px;
  margin-right: 2px;
  border: 2px solid #777;
  border-radius: 5px;
  background: linear-gradient(90deg, #d6d6d6 58%, #fff 58%) content-box;
  padding: 2px;
  font-size: 15px;
  line-height: 14px;
  font-weight: 700;
  color: #555;

  &::after {
    content: '';
    position: absolute;
    right: -4px;
    top: 6px;
    width: 2px;
    height: 5px;
    background: #777;
  }
`;

const Header = styled.header`
  display: flex;
  align-items: center;
  height: 96px;
  padding: 0 8px 16px 17px;
  border-bottom: 1px solid #e4e4e4;
  background: #fff;
`;

const BackButton = styled.button`
  margin-right: 8px;
`;

const ContactName = styled.h1`
  flex: 1;
  min-width: 0;
  margin: 0 0 0 16px;
  white-space: nowrap;
  font-size: 34px;
  line-height: 40px;
  font-weight: 400;
`;

const HeaderButton = styled.button`
  display: grid;
  place-items: center;
  width: ${({ $narrow }) => ($narrow ? '72px' : '96px')};
  height: 64px;
`;

const Chat = styled.main`
  position: relative;
  flex: 1;
  display: flex;
  flex-direction: column;
  overflow: hidden;
  background: #f5f1ea;
`;

const WallpaperSvg = styled.svg`
  position: absolute;
  inset: 0;
  width: 100%;
  height: 100%;
  fill: none;
  stroke: #eae0d4;
  stroke-width: 6;
  stroke-linecap: round;
  stroke-linejoin: round;
`;

const Thread = styled.section`
  position: relative;
  flex: 1;
  display: flex;
  flex-direction: column;
  gap: 20px;
  padding: 8px 34px 0;
`;

const DatePill = styled.div`
  align-self: center;
  padding: 14px 18px 10px;
  border-radius: 14px;
  background: rgba(255, 255, 255, 0.8);
  box-shadow: 0 1px 1px rgba(0, 0, 0, 0.1);
  font-size: 24px;
  line-height: 28px;
  font-weight: 600;
  color: #5b6368;
`;

const Bubble = styled.article`
  position: relative;
  border-radius: 24px 0 24px 24px;
  background: #d8fdd2;
  box-shadow: 0 1px 1px rgba(0, 0, 0, 0.12);
`;

const Tail = styled.span`
  position: absolute;
  top: 0;
  right: -14px;
`;

const Message = styled(Bubble)`
  display: flow-root;
  margin-left: 80px;
  padding: 12px 58px 7px 20px;
  font-size: 32px;
  line-height: 38px;
`;

// floats at the end of the last line and hangs a little below it
const Meta = styled.span`
  float: right;
  display: flex;
  align-items: center;
  gap: 8px;
  margin: 18px -40px 0 0;
  color: #56695c;
`;

const Time = styled.time`
  font-size: 24px;
  line-height: 28px;
  color: #56695c;
`;

const Call = styled(Bubble)`
  align-self: flex-end;
  padding: 8px;
`;

const CallCard = styled.div`
  display: flex;
  align-items: center;
  padding: 18px 16px;
  border-radius: 18px;
  background: #d6f1cd;
`;

const CallBadge = styled.span`
  display: grid;
  place-items: center;
  width: 80px;
  height: 80px;
  border-radius: 50%;
  background: #eefaea;
`;

const CallLines = styled.div`
  padding: 0 18px 8px 16px;
  font-size: 28px;
  line-height: 38px;
`;

const CallTitle = styled.div`
  font-weight: 600;
`;

const CallStatus = styled.div`
  color: #56695c;
`;

const CallTime = styled(Time)`
  align-self: flex-end;
`;

const Composer = styled.form`
  position: relative;
  display: flex;
  align-items: center;
  gap: 10px;
  padding: 19px 9px 9px 10px;
`;

const InputBar = styled.div`
  flex: 1;
  min-width: 0;
  display: flex;
  align-items: center;
  height: 92px;
  padding: 0 26px 0 22px;
  border-radius: 46px;
  background: #fff;
  box-shadow: 0 1px 2px rgba(0, 0, 0, 0.25);
  color: #5b6368;
`;

const MessageInput = styled.input`
  flex: 1;
  min-width: 0;
  height: 48px;
  margin: 0 24px;
  padding: 0;
  border: 0;
  outline: 0;
  background: none;
  font-family: inherit;
  font-size: 36px;
  color: #0b1014;

  &::placeholder {
    color: #5b6368;
    opacity: 1;
  }
`;

const CameraButton = styled.button`
  margin-left: 64px;
`;

const MicButton = styled.button`
  display: grid;
  place-items: center;
  width: 94px;
  height: 94px;
  border-radius: 50%;
  background: #1dab61;
  box-shadow: 0 2px 4px rgba(0, 0, 0, 0.3);
  color: #fff;
`;

const NavBar = styled.nav`
  display: flex;
  justify-content: center;
  height: 88px;
  background: #f7f7f7;
  color: #cfcfcf;
`;

const NavButton = styled.button`
  display: grid;
  place-items: center;
  width: 172px;
`;

export default App;
